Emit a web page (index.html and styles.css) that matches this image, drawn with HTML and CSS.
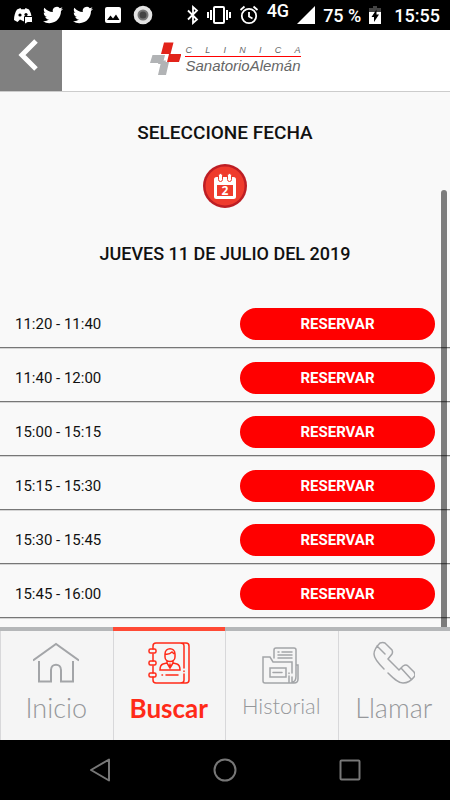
FILE: index.html
```html
<!DOCTYPE html>
<html lang="es">
<head>
    <meta charset="UTF-8">
    <meta name="viewport" content="width=device-width, initial-scale=1.0">
    <title>Reserva de turnos</title>
    <link rel="stylesheet" href="styles.css">
</head>
<body>
    <svg width="0" height="0" class="sprite" aria-hidden="true">
        <symbol id="bird" viewBox="0 0 24 24">
            <path d="M23.95 4.57a10 10 0 0 1-2.82.77 4.96 4.96 0 0 0 2.16-2.72c-.95.55-2 .95-3.13 1.18a4.92 4.92 0 0 0-8.38 4.48C7.69 8.1 4.07 6.13 1.64 3.16a4.82 4.82 0 0 0-.67 2.48c0 1.71.87 3.21 2.19 4.1a4.9 4.9 0 0 1-2.23-.62v.06a4.92 4.92 0 0 0 3.95 4.83 5 5 0 0 1-2.21.08 4.94 4.94 0 0 0 4.6 3.42A9.87 9.87 0 0 1 0 19.54a13.99 13.99 0 0 0 7.55 2.21c9.05 0 14-7.5 14-13.98 0-.21 0-.42-.02-.63a9.94 9.94 0 0 0 2.46-2.55z"/>
        </symbol>
    </svg>

    <div class="status-bar">
        <div class="status-left">
            <svg width="20" height="20" viewBox="0 0 20 20"><path fill="#fff" d="M4 4.500 7.500 3l.6 1.200h3.800L12.500 3 16 4.500c1.500 2.500 2.500 5 2.500 7.500H11v4.500L7 14.500 4.500 17 1 15C1 11 2 7.500 4 4.500z"/><circle cx="7" cy="10" r="1.600"/><circle cx="13" cy="9.500" r="1.600"/><path fill="#fff" stroke="#000" d="M11.500 11.500h8v6h-5l-3 2z"/></svg>
            <svg width="20" height="20" fill="#fff"><use href="#bird"/></svg>
            <svg width="20" height="20" fill="#fff"><use href="#bird"/></svg>
            <svg width="20" height="20" viewBox="0 0 20 20"><rect x="2" y="2" width="16" height="16" rx="2" fill="#fff"/><path d="m4 15 3.500-4.500 2.500 3 3-4L16.500 15z"/></svg>
            <svg width="20" height="20" viewBox="0 0 20 20"><circle cx="10" cy="10" r="9.300" fill="#e4e4e4"/><circle cx="10" cy="10" r="4.500" fill="#444" stroke="#777" stroke-width="2"/></svg>
        </div>
        <div class="status-right">
            <svg width="12" height="20" viewBox="0 0 12 20" fill="none" stroke="#fff" stroke-width="1.800"><path d="m1 5.500 9 9L6 18V2l4 3.500-9 9"/></svg>
            <svg width="24" height="20" viewBox="0 0 24 20" fill="none" stroke="#fff" stroke-width="2"><rect x="7" y="2" width="10" height="16" rx="1"/><path d="M4 5v10M20 5v10M1 7v6M23 7v6"/></svg>
            <svg width="20" height="20" viewBox="0 0 20 20" fill="none" stroke="#fff" stroke-width="1.800"><circle cx="10" cy="11" r="7.200"/><path d="M10 7v4.500l3.500 2M1.500 5 5.500 1.500M18.500 5l-4-3.500"/></svg>
            <span class="network">4G</span>
            <svg width="18" height="18" viewBox="0 0 18 18" fill="#fff"><path d="M18 0v18H0z"/></svg>
            <span>75 %</span>
            <svg width="12" height="18" viewBox="0 0 12 18"><path fill="#444" d="M4 0h4v2h4v5H0V2h4z"/><path fill="#fff" d="M0 6h12v12H0z"/><path d="M7.500 3.500 2.500 11H5v5l5-7.500H7.500z"/></svg>
            <span class="clock">15:55</span>
        </div>
    </div>

    <header class="header">
        <button class="back-button" aria-label="Volver">
            <svg width="24" height="34" viewBox="0 0 24 34" fill="none" stroke="#fff" stroke-width="5"><path d="M21 3 7 17l14 14"/></svg>
        </button>
        <div class="logo">
            <svg width="32" height="34" viewBox="0 0 32 34">
                <path fill="#b1b3b5" d="M3.500 14H16l-2 8H1zM12 21h8l-3 13H9z"/>
                <path fill="#b1b3b5" d="M10 19.500h7L16 23H9z"/>
                <path fill="#e2231a" d="M15 1.500h9.500l-3 11.500H12zM20 13h12.500L30 21H18z"/>
            </svg>
            <div class="logo-text">
                <div class="logo-top"><span>C</span><span>L</span><span>I</span><span>N</span><span>I</span><span>C</span><span>A</span></div>
                <div class="logo-name">SanatorioAlemán</div>
            </div>
        </div>
    </header>

    <main class="content">
        <h1 class="title">SELECCIONE FECHA</h1>
        <button class="date-button" aria-label="Elegir fecha">
            <svg width="44" height="44" viewBox="0 0 44 44">
                <circle cx="22" cy="22" r="22" fill="#bd1e24"/>
                <circle cx="22" cy="22" r="19.500" fill="#ef3b2d"/>
                <rect x="11" y="13" width="22" height="22" rx="2.500" fill="#fff"/>
                <path fill="#ef3b2d" d="M14 21h16v11H14z"/>
                <rect x="15.500" y="9.500" width="4" height="8" rx="2" fill="#fff" stroke="#ef3b2d"/>
                <rect x="24.500" y="9.500" width="4" height="8" rx="2" fill="#fff" stroke="#ef3b2d"/>
                <text x="22" y="31" class="day">2</text>
            </svg>
        </button>
        <h2 class="title date">JUEVES 11 DE JULIO DEL 2019</h2>

        <ul class="slots">
            <li class="slot"><span>11:20 - 11:40</span><button class="reserve">RESERVAR</button></li>
            <li class="slot"><span>11:40 - 12:00</span><button class="reserve">RESERVAR</button></li>
            <li class="slot"><span>15:00 - 15:15</span><button class="reserve">RESERVAR</button></li>
            <li class="slot"><span>15:15 - 15:30</span><button class="reserve">RESERVAR</button></li>
            <li class="slot"><span>15:30 - 15:45</span><button class="reserve">RESERVAR</button></li>
            <li class="slot"><span>15:45 - 16:00</span><button class="reserve">RESERVAR</button></li>
        </ul>
        <div class="scroll-thumb"></div>
    </main>

    <nav class="tabs">
        <a class="tab" href="#inicio">
            <svg width="46" height="44" viewBox="0 0 46 44" fill="none" stroke="#a3a5a8" stroke-width="2"><path d="M0 19.500 23 3l23 16.500M6 20v20.500h12V29c0-7 10-7 10 0v11.500h12V20"/></svg>
            <span>Inicio</span>
        </a>
        <a class="tab active" href="#buscar">
            <svg width="42" height="44" viewBox="0 0 42 44" fill="none" stroke="#ff2a18" stroke-width="1.500" stroke-linecap="round">
                <path d="M5 8V5q0-3 3-3h30q3 0 3 3v34q0 3-3 3H8q-3 0-3-3v-3M5 13v7M5 25v7M32 2q4 0 4 3v22M36 33v6q0 3-4 3M36 30v.5"/>
                <rect x="1" y="8" width="7" height="4" rx="1.500"/><rect x="1" y="20" width="7" height="4" rx="1.500"/><rect x="1" y="32" width="7" height="4" rx="1.500"/>
                <path d="M17 13c0-7 10-7 10 0v3c0 6-10 6-10 0zM17 13c4 1 6-1 7-2 1 1 2 2 3 2M19 20v2l-4 1q-3 1-3 6h20q0-5-3-6l-4-1v-2M19 22l3 5 3-5M22 23v4M14 34h.5M18 34h12"/>
            </svg>
            <span>Buscar</span>
        </a>
        <a class="tab small" href="#historial">
            <svg width="38" height="44" viewBox="0 0 38 44" fill="none" stroke="#a3a5a8" stroke-width="1.500" stroke-linecap="round">
                <path d="M12 17V9q0-2 2-2h18q2 0 2 2v26M1 40V16h7l3 5h19v11M1 40q0 2 2 2h29q4 0 4-4V24h-2M30 36v5q4 0 4-6M27 32v.5M27 35v7"/>
                <rect x="8" y="27" width="16" height="9"/>
                <path d="M11 31.500h9M16 11h1M20 11h10M16 14h14M16 17h14"/>
            </svg>
            <span>Historial</span>
        </a>
        <a class="tab" href="#llamar">
            <svg width="42" height="44" viewBox="0 0 42 44" fill="none" stroke="#a3a5a8" stroke-width="1.500" stroke-linecap="round">
                <path d="M11 28C4 21 1 17 1 13 1 8 4 5 7 2q3-1 5 0l7 7q1 2 0 4l-4 5 11 11 4-4q3-2 5 0l6 6q2 3 0 5c-3 4-7 6-11 6-5 0-10-5-15-10M4 5l8 8M28 27l10 11"/>
            </svg>
            <span>Llamar</span>
        </a>
    </nav>

    <div class="system-nav">
        <button aria-label="Atrás"><svg width="24" height="24" viewBox="0 0 24 24"><path d="M21 1.500v21L3 12z"/></svg></button>
        <button aria-label="Inicio del sistema"><svg width="24" height="24" viewBox="0 0 24 24"><circle cx="12" cy="12" r="10.500"/></svg></button>
        <button aria-label="Recientes"><svg width="24" height="24" viewBox="0 0 24 24"><rect x="2.500" y="2.500" width="19" height="19" rx="1"/></svg></button>
    </div>
</body>
</html>
```
FILE: styles.css
```css
* {
    box-sizing: border-box;
}
body {
    margin: 0;
    height: 100vh;
    display: flex;
    flex-direction: column;
    background-color: #f9f9f9;
    color: #111;
    font-family: Roboto, sans-serif;
}
button {
    border: none;
    padding: 0;
    background: none;
    font-family: inherit;
    cursor: pointer;
}
svg {
    display: block;
    flex-shrink: 0;
}
.sprite {
    position: absolute;
}
.status-bar {
    display: flex;
    justify-content: space-between;
    height: 30px;
    flex-shrink: 0;
    padding: 0 10px 0 13px;
    background-color: #000;
    color: #fff;
    font-size: 18px;
    font-weight: 500;
    white-space: nowrap;
}
.status-left, .status-right {
    display: flex;
    align-items: center;
    gap: 10px;
}
.status-right {
    gap: 8px;
}
.network {
    line-height: 22px;
    align-self: flex-start;
}
.clock {
    margin-left: 5px;
}
.header {
    display: flex;
    height: 62px;
    flex-shrink: 0;
    background-color: #fff;
    border-bottom: 1px solid #ccc;
}
.back-button {
    width: 62px;
    display: flex;
    justify-content: center;
    padding-top: 8px;
    padding-right: 8px;
    background-color: #808080;
}
.logo {
    flex: 1;
    display: flex;
    gap: 4px;
    justify-content: center;
    padding-top: 11px;
    padding-right: 62px;
}
.logo-text {
    padding-top: 3px;
    font-family: "Liberation Sans", Arial, sans-serif;
    font-style: italic;
    color: #666;
}
.logo-top {
    display: flex;
    justify-content: space-between;
    font-size: 9px;
    line-height: 12px;
    border-bottom: 1px solid #f00;
}
.logo-name {
    font-size: 15px;
    line-height: 17px;
}
.content {
    position: relative;
    flex: 1;
    min-height: 0;
    overflow: hidden;
    display: flex;
    flex-direction: column;
    align-items: center;
    padding-top: 29px;
}
.title {
    margin: 0;
    font-size: 19px;
    line-height: 24px;
    font-weight: 500;
}
.title.date {
    font-size: 18px;
}
.date-button {
    margin: 19px 0 34px;
}
.day {
    font-family: "Open Sans", sans-serif;
    font-size: 12px;
    font-weight: bold;
    text-anchor: middle;
    fill: #fff;
}
.slots {
    list-style: none;
    width: 100%;
    margin: 28px 0 0;
    padding: 0;
}
.slot {
    display: grid;
    grid-template-columns: 1fr 1fr;
    column-gap: 30px;
    align-items: center;
    padding: 14px 15px 7px;
    border-bottom: 1px solid #777;
    box-shadow: 0 1px #d5d5d5;
    font-size: 15px;
    line-height: 32px;
}
.reserve {
    height: 32px;
    border-radius: 16px;
    background-color: #f00;
    color: #fff;
    font-size: 15px;
    font-weight: bold;
}
.scroll-thumb {
    position: absolute;
    top: 98px;
    right: 3px;
    bottom: 0;
    width: 6px;
    border-radius: 3px 3px 0 0;
    background-color: rgba(0, 0, 0, 0.5);
}
.tabs {
    display: flex;
    height: 113px;
    flex-shrink: 0;
    background-color: #f5f5f5;
}
.tab {
    flex: 1 1 0;
    display: flex;
    flex-direction: column;
    align-items: center;
    padding-top: 10px;
    border-top: 4px solid #b5b7b9;
    box-shadow: inset 1px 0 #d8d8da;
    color: #96989b;
    font-family: Lato, sans-serif;
    font-size: 27px;
    font-weight: 300;
    line-height: 32px;
    text-decoration: none;
}
.tab span {
    margin-top: 7px;
}
.tab.small {
    font-size: 22px;
}
.tab.small span {
    margin-top: 5px;
}
.tab.active {
    border-top-color: #ff4a35;
    color: #ff2a18;
    font-size: 26px;
    font-weight: bold;
}
.system-nav {
    display: flex;
    justify-content: center;
    align-items: center;
    gap: 101px;
    height: 60px;
    flex-shrink: 0;
    background-color: #000;
}
.system-nav svg {
    fill: none;
    stroke: #777;
    stroke-width: 2;
    stroke-linejoin: round;
}
```
